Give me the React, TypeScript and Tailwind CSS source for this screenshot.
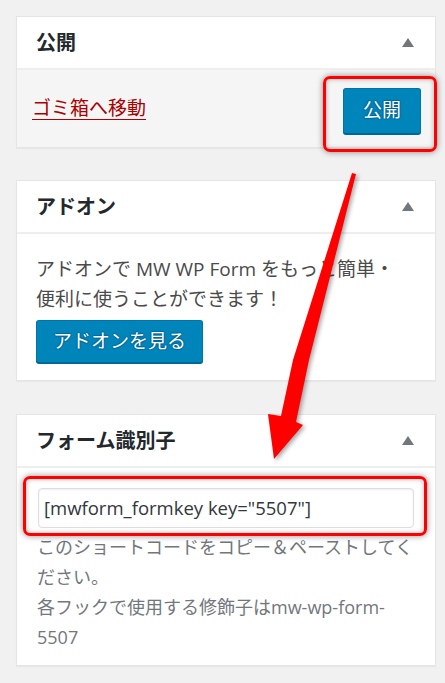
import React from "react";

const font = { fontFamily: '"Open Sans", "Noto Sans CJK JP", sans-serif' };

function Triangle() {
  return (
    <svg width="12" height="9" viewBox="0 0 12 9" className="block">
      <polygon points="6,0 12,9 0,9" fill="#72777c" />
    </svg>
  );
}

function Header({ title }: { title: string }) {
  return (
    <div className="flex h-[53px] items-center justify-between border-b-2 border-[#eeeeee] pl-[19px] pr-[21px]">
      <span className="text-[20px] font-bold leading-none text-[#23282d]">{title}</span>
      <Triangle />
    </div>
  );
}

function RedBox({ cls }: { cls: string }) {
  return (
    <div
      className={`pointer-events-none absolute rounded-[7px] border-[3px] border-[#ff0000] shadow-[0_0_6px_rgba(0,0,0,0.45),inset_0_0_5px_rgba(0,0,0,0.3)] ${cls}`}
    />
  );
}

const btn =
  "rounded-[3px] border border-[#0073aa] border-b-[#006799] bg-[#0085ba] text-white shadow-[0_1px_0_#006799] [text-shadow:0_-1px_1px_#006799,1px_0_1px_#006799,0_1px_1px_#006799,-1px_0_1px_#006799]";

export default function App() {
  return (
    <div className="relative h-[683px] w-[445px] overflow-hidden bg-[#f1f1f1] pl-[16px] pt-[16px]" style={font}>
      {/* Panel 1 */}
      <div className="w-[420px] border border-[#e5e5e5] bg-white shadow-[0_1px_1px_rgba(0,0,0,0.04)]">
        <Header title="公開" />
        <div className="flex h-[77px] items-center justify-between bg-[#f5f5f5] pl-[15px] pr-[14px]">
          <a className="text-[19px] leading-none text-[#aa0000] underline underline-offset-[4px]">ゴミ箱へ移動</a>
          <div className="relative mt-[4px]">
            <button className={`h-[46px] w-[78px] text-[19px] leading-none ${btn}`}>公開</button>
            <RedBox cls="-left-[20px] -right-[16px] -top-[12px] -bottom-[18px]" />
          </div>
        </div>
      </div>

      {/* Panel 2 */}
      <div className="mt-[32px] w-[420px] border border-[#e5e5e5] bg-white shadow-[0_1px_1px_rgba(0,0,0,0.04)]">
        <Header title="アドオン" />
        <div className="px-[19px] pb-[17px] pt-[20px]">
          <p className="text-[19px] leading-[30px] text-[#4a4a4a]">
            アドオンで MW WP Form をもっと簡単・
            <br />
            便利に使うことができます！
          </p>
          <button className={`mt-[6px] h-[43px] px-[16px] text-[19px] leading-none ${btn}`}>アドオンを見る</button>
        </div>
      </div>

      {/* Panel 3 */}
      <div className="mt-[33px] w-[420px] border border-[#e5e5e5] bg-white shadow-[0_1px_1px_rgba(0,0,0,0.04)]">
        <Header title="フォーム識別子" />
        <div className="pb-[13px] pl-[20px] pr-[16px] pt-[20px]">
          <div className="relative ml-[1px] w-[376px]">
            <div className="flex h-[40px] items-center rounded-[4px] border border-[#dddddd] bg-white pl-[5px] text-[18.5px] text-[#32373c] shadow-[inset_0_1px_2px_rgba(0,0,0,0.07)]">
              [mwform_formkey key="5507"]
            </div>
            <RedBox cls="-left-[15px] -right-[13px] -top-[12px] -bottom-[8px]" />
          </div>
          <p className="mt-[4px] whitespace-nowrap text-[18px] leading-[30px] text-[#72777c]">
            このショートコードをコピー＆ペーストしてく
            <br />
            ださい。
            <br />
            各フックで使用する修飾子はmw-wp-form-
            <br />
            5507
          </p>
        </div>
      </div>

      {/* Arrow overlay */}
      <svg
        className="pointer-events-none absolute left-0 top-0"
        width="445"
        height="683"
        viewBox="0 0 445 683"
        style={{ filter: "drop-shadow(2px 2px 2px rgba(0,0,0,0.35))" }}
      >
        <polygon
          points="352,173 356,174 309,360 296,422 303,425 274,459 268,414 281,416 293,360"
          fill="#ff0000"
        />
      </svg>
    </div>
  );
}
